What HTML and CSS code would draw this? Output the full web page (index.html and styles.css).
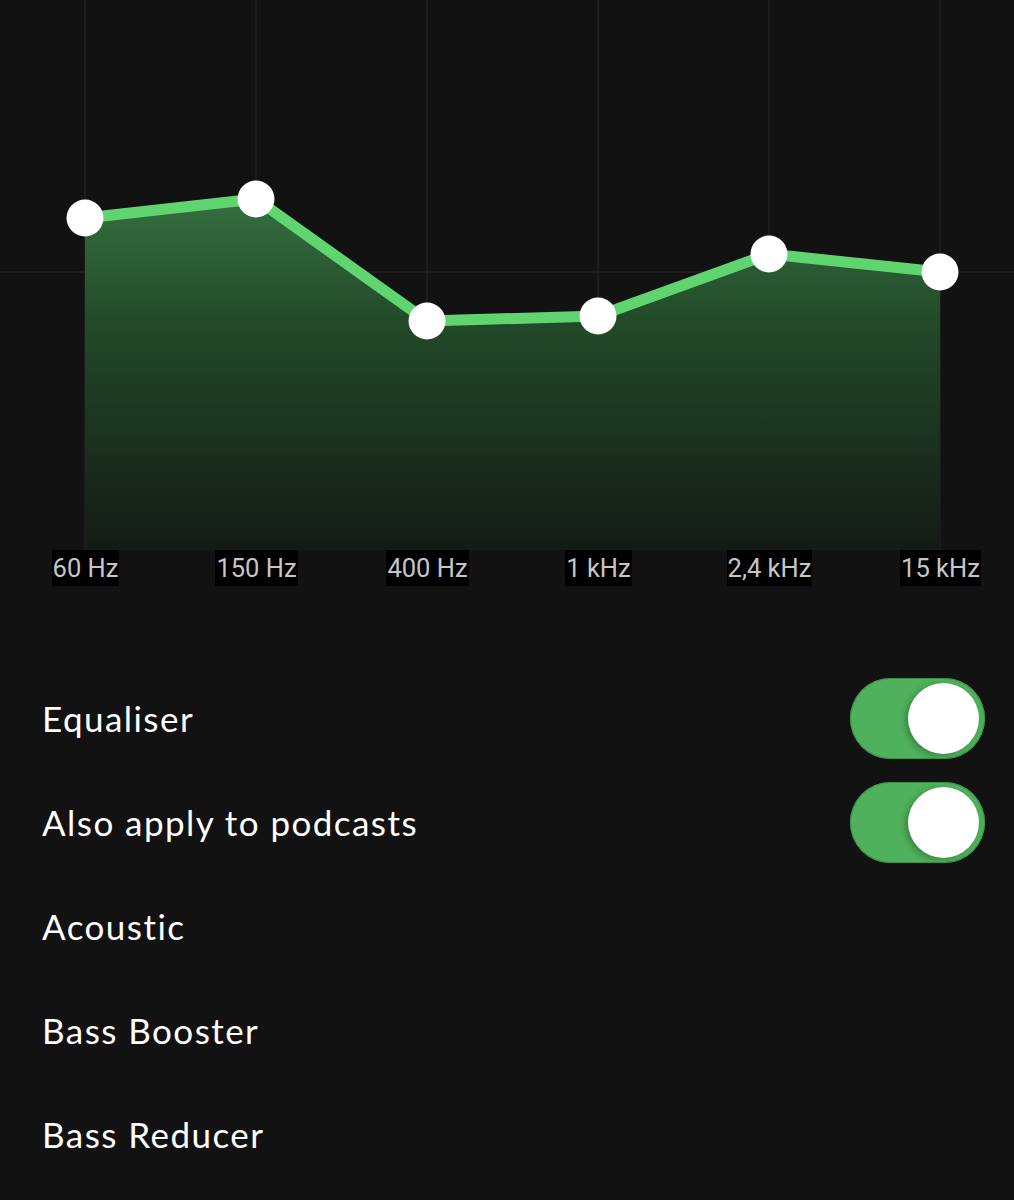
FILE: index.html
```html
<!DOCTYPE html>
<html lang="en">
<head>
<meta charset="utf-8">
<title>Equaliser</title>
<link rel="stylesheet" href="styles.css">
</head>
<body>
<main class="screen">
  <section class="chart">
    <svg class="chart-svg" width="1014" height="550" viewBox="0 0 1014 550">
      <defs>
        <linearGradient id="areaGrad" x1="0" y1="199" x2="0" y2="550" gradientUnits="userSpaceOnUse">
          <stop offset="0" stop-color="#356f3f"/>
          <stop offset="0.35" stop-color="#224a29"/>
          <stop offset="1" stop-color="#141a15"/>
        </linearGradient>
      </defs>
      <g class="grid">
        <line x1="85" y1="0" x2="85" y2="550"/>
        <line x1="256" y1="0" x2="256" y2="550"/>
        <line x1="427" y1="0" x2="427" y2="550"/>
        <line x1="598" y1="0" x2="598" y2="550"/>
        <line x1="769" y1="0" x2="769" y2="550"/>
        <line x1="940" y1="0" x2="940" y2="550"/>
        <line x1="0" y1="272" x2="1014" y2="272"/>
      </g>
      <polygon class="area" points="85,218 256,199 427,321 598,316 769,254 940,272 940,550 85,550" fill="url(#areaGrad)"/>
      <polyline class="curve" points="85,218 256,199 427,321 598,316 769,254 940,272"/>
      <g class="knobs">
        <circle cx="85" cy="218" r="18.5"/>
        <circle cx="256" cy="199" r="18.5"/>
        <circle cx="427" cy="321" r="18.5"/>
        <circle cx="598" cy="316" r="18.5"/>
        <circle cx="769" cy="254" r="18.5"/>
        <circle cx="940" cy="272" r="18.5"/>
      </g>
    </svg>
    <div class="freqs">
      <div class="freq"><span>60 Hz</span></div>
      <div class="freq"><span>150 Hz</span></div>
      <div class="freq"><span>400 Hz</span></div>
      <div class="freq"><span>1 kHz</span></div>
      <div class="freq"><span>2,4 kHz</span></div>
      <div class="freq"><span>15 kHz</span></div>
    </div>
  </section>
  <ul class="settings">
    <li class="row"><span class="label">Equaliser</span><span class="toggle on"><span class="knob"></span></span></li>
    <li class="row"><span class="label">Also apply to podcasts</span><span class="toggle on"><span class="knob"></span></span></li>
    <li class="row"><span class="label">Acoustic</span></li>
    <li class="row"><span class="label">Bass Booster</span></li>
    <li class="row"><span class="label">Bass Reducer</span></li>
  </ul>
</main>
</body>
</html>
```

FILE: styles.css
```css
html, body {
  margin: 0;
  padding: 0;
  background: #121212;
  overflow: hidden;
}
body {
  width: 1014px;
  height: 1200px;
  font-family: "Lato", "Noto Sans", sans-serif;
  color: #ffffff;
}
.screen {
  display: flex;
  flex-direction: column;
}
.chart {
  display: flex;
  flex-direction: column;
}
.chart-svg {
  display: block;
}
.grid line {
  stroke: #1d1d1d;
  stroke-width: 2;
}
.curve {
  fill: none;
  stroke: #5fd46f;
  stroke-width: 11;
  stroke-linejoin: round;
}
.knobs circle {
  fill: #ffffff;
}
.freqs {
  display: grid;
  grid-template-columns: repeat(6, 171px);
  height: 36px;
}
.freq {
  display: flex;
  justify-content: center;
  align-items: stretch;
}
.freq span {
  background: #000000;
  color: #c6c6c6;
  font-family: "Roboto", "Liberation Sans", sans-serif;
  font-size: 25.5px;
  line-height: 36px;
  letter-spacing: 0;
  padding: 0 1px;
}
.settings {
  list-style: none;
  margin: 80px 0 0 0;
  padding: 0 29px 0 42px;
}
.row {
  height: 104px;
  display: flex;
  align-items: center;
  justify-content: space-between;
}
.label {
  font-size: 35px;
  font-weight: 400;
  letter-spacing: 1.45px;
}
.toggle {
  width: 135px;
  height: 81px;
  border-radius: 41px;
  background: #4fb15b;
  box-shadow: inset 0 0 0 1px #3d9048;
  display: flex;
  align-items: center;
  justify-content: flex-end;
  padding: 0 6px;
  box-sizing: border-box;
}
.knob {
  width: 71px;
  height: 71px;
  border-radius: 50%;
  background: #ffffff;
  box-shadow: -3px 2px 6px rgba(0, 0, 0, 0.25);
}
```
